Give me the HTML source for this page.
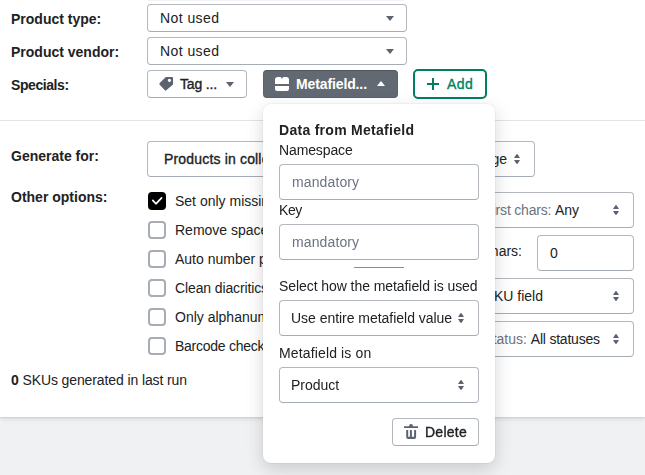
<!DOCTYPE html>
<html><head><meta charset="utf-8">
<style>
*{box-sizing:border-box;margin:0;padding:0}
html,body{width:645px;height:475px;overflow:hidden;background:#f0f1f3;font-family:"Liberation Sans",sans-serif;color:#202223}
.card{position:absolute;left:0;top:0;width:645px;height:417px;background:#fff;box-shadow:0 1px 1px rgba(0,0,0,.06),0 2px 5px rgba(0,0,0,.1)}
.a{position:absolute;white-space:nowrap}
.t{position:absolute;white-space:nowrap;font-size:14px;line-height:16px}
.b{font-weight:bold}
.sb{-webkit-text-stroke:0.35px currentColor}
.box{position:absolute;border:1px solid #b3b8bf;border-bottom-color:#a6acb4;border-radius:4px;background:#fff}
.tri{position:absolute;width:0;height:0;border-left:4px solid transparent;border-right:4px solid transparent;border-top:5px solid #5c6370}
.ud{position:absolute;width:6px;height:10px}
.cb{position:absolute;left:148px;width:18px;height:18px;border:2px solid #a7adb5;border-radius:4px;background:#fff}
.gray{color:#6c7380}
</style></head><body>
<div class="card"></div>

<div class="a" style="left:148px;top:0;width:257px;height:1px;background:#f4f4f6"></div>
<!-- labels -->
<div class="t b" id="l1" style="left:11px;top:11px">Product type:</div>
<div class="t b" id="l2" style="left:11px;top:44px">Product vendor:</div>
<div class="t b" id="l3" style="letter-spacing:-0.42px;left:11px;top:77px">Specials:</div>
<div class="t b" id="l4" style="left:11px;top:148px">Generate for:</div>
<div class="t b" id="l5" style="left:11px;top:188.5px">Other options:</div>

<!-- selects -->
<div class="box" style="left:147px;top:4px;width:260px;height:28px"></div>
<div class="t" id="s1" style="letter-spacing:0.43px;left:160px;top:10px">Not used</div>
<div class="tri" style="left:386px;top:16px"></div>
<div class="box" style="left:147px;top:37px;width:260px;height:28px"></div>
<div class="t" id="s2" style="letter-spacing:0.43px;left:160px;top:43px">Not used</div>
<div class="tri" style="left:386px;top:49px"></div>

<!-- tag button -->
<div class="box" style="left:147px;top:70px;width:100px;height:28px"></div>
<svg class="a" style="left:159px;top:77px" width="14" height="14" viewBox="0 0 14 14"><path d="M13.2 0H6.8L0.7 6.1Q0 6.9 0.7 7.7L5.9 13.3Q6.6 14 7.3 13.3L14 7.6V0.8Q14 0 13.2 0Z M10.4 3.3m-1.6 0a1.6 1.6 0 1 0 3.2 0a1.6 1.6 0 1 0 -3.2 0" fill="#5c6370" fill-rule="evenodd"/></svg>
<div class="t sb" id="tag" style="letter-spacing:-0.15px;left:180px;top:76px">Tag ...</div>
<div class="tri" style="left:226px;top:82px"></div>

<!-- metafield button -->
<div class="a" style="left:263px;top:70px;width:135px;height:28px;background:#626973;border-radius:4px;box-shadow:inset 0 1px 0 rgba(0,0,0,.12),inset 0 0 0 1px rgba(0,0,0,.06)"></div>
<svg class="a" style="left:275px;top:77px" width="14" height="14" viewBox="0 0 14 14"><path d="M0 2.8Q0 0 2.8 0H5.3Q6.1 0 6.5 1L7 1.9L7.5 1Q7.9 0 8.7 0H11.2Q14 0 14 2.8V7.1H0Z M0 8.9H14V12Q14 14 12 14H2Q0 14 0 12Z" fill="#fff"/></svg>
<div class="t b" id="meta" style="letter-spacing:-0.12px;left:296px;top:76px;color:#fff">Metafield...</div>
<div class="a" style="left:377px;top:81px;width:0;height:0;border-left:4px solid transparent;border-right:4px solid transparent;border-bottom:5px solid #fff"></div>

<!-- add button -->
<div class="a" style="left:413px;top:69px;width:74px;height:30px;border:2px solid #007f5f;border-radius:5px"></div>
<div class="a" style="left:427px;top:83px;width:12px;height:2px;background:#007f5f"></div>
<div class="a" style="left:432px;top:78px;width:2px;height:12px;background:#007f5f"></div>
<div class="t sb" id="add" style="letter-spacing:0.5px;left:447px;top:76px;color:#007f5f">Add</div>

<!-- separator -->
<div class="a" style="left:0;top:120px;width:645px;height:1px;background:#e1e3e5"></div>

<!-- generate for -->
<div class="box" style="left:147px;top:141px;width:388px;height:36px"></div>
<div class="t sb" id="prod" style="letter-spacing:0.17px;left:164px;top:151px">Products in collection</div>
<div class="t" id="ge" style="right:138px;top:151px">Page</div>
<svg class="ud" style="left:514px;top:154px" viewBox="0 0 6 10"><path d="M2.4 0.2H3.6L6 4H0Z M0 6H6L3.6 9.8H2.4Z" fill="#5c6370"/></svg>

<!-- checkboxes -->
<div class="cb" style="top:192px;background:#000;border-color:#000"></div>
<svg class="a" style="left:151px;top:196px" width="12" height="10" viewBox="0 0 12 10"><path d="M1.8 4.4L4.9 7.8L10.6 1.8" stroke="#fff" stroke-width="1.7" fill="none" stroke-linecap="round" stroke-linejoin="round"/></svg>
<div class="cb" style="top:221px"></div>
<div class="cb" style="top:250px"></div>
<div class="cb" style="top:279px"></div>
<div class="cb" style="top:308px"></div>
<div class="cb" style="top:337px"></div>
<div class="t" id="c1" style="left:175px;top:193px">Set only missing SKUs</div>
<div class="t" id="c2" style="left:175px;top:222px">Remove spaces</div>
<div class="t" id="c3" style="left:175px;top:251px">Auto number products</div>
<div class="t" id="c4" style="letter-spacing:-0.12px;left:175px;top:280px">Clean diacritics</div>
<div class="t" id="c5" style="left:175px;top:309px">Only alphanumeric</div>
<div class="t" id="c6" style="letter-spacing:-0.25px;left:175px;top:338px">Barcode check</div>

<div class="t" id="skus" style="letter-spacing:-0.11px;left:11px;top:372px"><b>0</b> SKUs generated in last run</div>

<!-- right column -->
<div class="box" style="left:400px;top:192px;width:234px;height:36px"></div>
<div class="t" id="r1" style="right:66px;top:202px"><span class="gray" style="letter-spacing:-0.2px">Use first chars: </span>Any</div>
<svg class="ud" style="left:613px;top:205px" viewBox="0 0 6 10"><path d="M2.4 0.2H3.6L6 4H0Z M0 6H6L3.6 9.8H2.4Z" fill="#5c6370"/></svg>
<div class="t" id="r2" style="right:123px;top:243px">Max chars:</div>
<div class="box" style="left:537px;top:235px;width:97px;height:36px"></div>
<div class="t" id="r3" style="left:550px;top:245px">0</div>
<div class="box" style="left:400px;top:278px;width:234px;height:36px"></div>
<div class="t" id="r4" style="right:102px;top:288px">Use SKU field</div>
<svg class="ud" style="left:613px;top:291px" viewBox="0 0 6 10"><path d="M2.4 0.2H3.6L6 4H0Z M0 6H6L3.6 9.8H2.4Z" fill="#5c6370"/></svg>
<div class="box" style="left:400px;top:321px;width:234px;height:36px"></div>
<div class="t" id="r5" style="right:45px;top:331px"><span class="gray">Status:</span> <span style="letter-spacing:-0.22px">All statuse</span>s</div>
<svg class="ud" style="left:613px;top:334px" viewBox="0 0 6 10"><path d="M2.4 0.2H3.6L6 4H0Z M0 6H6L3.6 9.8H2.4Z" fill="#5c6370"/></svg>

<!-- popover -->
<div style="position:absolute;left:0;top:0;width:645px;height:475px;will-change:transform">
<div class="a" style="left:263px;top:104px;width:232px;height:359px;background:#fff;border-radius:8px;box-shadow:0 0 2px rgba(0,0,0,.12),0 6px 18px rgba(0,0,0,.16)"></div>
<div class="t b" id="p1" style="letter-spacing:0.28px;left:279px;top:122px">Data from Metafield</div>
<div class="t" id="p2" style="letter-spacing:-0.12px;left:279px;top:142px">Namespace</div>
<div class="box" style="left:279px;top:164px;width:200px;height:36px"></div>
<div class="t gray" id="p3" style="letter-spacing:0.12px;left:292px;top:174px">mandatory</div>
<div class="t" id="p4" style="letter-spacing:-0.4px;left:279px;top:202px">Key</div>
<div class="box" style="left:279px;top:224px;width:200px;height:36px"></div>
<div class="t gray" id="p5" style="letter-spacing:0.12px;left:292px;top:234px">mandatory</div>
<div class="a" style="left:354px;top:267px;width:50px;height:1px;background:#8d8d8f"></div>
<div class="t" id="p6" style="letter-spacing:-0.07px;left:279px;top:278px">Select how the metafield is used</div>
<div class="box" style="left:279px;top:300px;width:200px;height:36px"></div>
<div class="t" id="p7" style="left:291px;letter-spacing:-0.03px;top:310px">Use entire metafield value</div>
<svg class="ud" style="left:458px;top:313px" viewBox="0 0 6 10"><path d="M2.4 0.2H3.6L6 4H0Z M0 6H6L3.6 9.8H2.4Z" fill="#5c6370"/></svg>
<div class="t" id="p8" style="letter-spacing:0.14px;left:279px;top:345px">Metafield is on</div>
<div class="box" style="left:279px;top:367px;width:200px;height:36px"></div>
<div class="t" id="p9" style="left:291px;top:377px">Product</div>
<svg class="ud" style="left:458px;top:380px" viewBox="0 0 6 10"><path d="M2.4 0.2H3.6L6 4H0Z M0 6H6L3.6 9.8H2.4Z" fill="#5c6370"/></svg>
<div class="box" style="left:392px;top:418px;width:87px;height:28px"></div>
<svg class="a" style="left:404px;top:424px" width="14" height="15" viewBox="0 0 14 15"><path d="M0 2.2H14V4H0Z M5 2.2Q5 0 7 0Q9 0 9 2.2Z M2.2 6H4.2V12.8H5.9V6H7.9V12.8H10.1V6H12.1V13Q12.1 15 10.1 15H4.2Q2.2 15 2.2 13Z" fill="#5c6370"/></svg>
<div class="t sb" id="del" style="letter-spacing:0.25px;left:425px;top:424px">Delete</div>

</div>
</body></html>
